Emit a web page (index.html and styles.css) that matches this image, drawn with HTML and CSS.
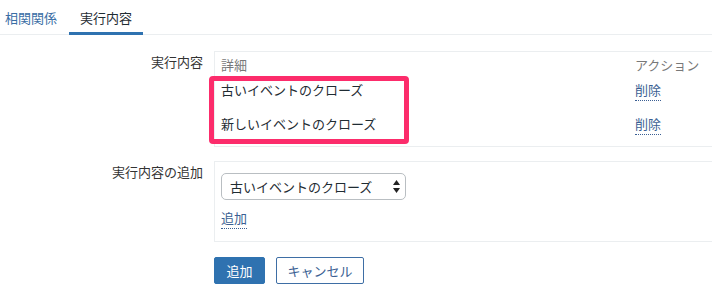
FILE: index.html
```html
<!DOCTYPE html>
<html lang="ja">
<head>
    <meta charset="UTF-8">
    <meta name="viewport" content="width=device-width, initial-scale=1.0">
    <title>アクションの設定</title>
    <link rel="stylesheet" href="styles.css">
</head>
<body>
    <div class="page">
        <!-- Tabs -->
        <ul class="tabs">
            <li class="tab"><a href="#">相関関係</a></li>
            <li class="tab active">実行内容</li>
        </ul>

        <!-- Operations list -->
        <div class="form-row">
            <div class="form-label">実行内容</div>
            <div class="form-field">
                <div class="op-box op-table">
                    <div class="cell head">詳細</div>
                    <div class="cell head">アクション</div>
                    <div class="cell row">古いイベントのクローズ</div>
                    <div class="cell row"><a href="#" class="link">削除</a></div>
                    <div class="cell row">新しいイベントのクローズ</div>
                    <div class="cell row"><a href="#" class="link">削除</a></div>
                    <div class="highlight" aria-hidden="true"></div>
                </div>
            </div>
        </div>

        <!-- Add operation -->
        <div class="form-row">
            <div class="form-label">実行内容の追加</div>
            <div class="form-field">
                <div class="op-box op-new">
                    <span class="select-wrap">
                        <select class="select">
                            <option>古いイベントのクローズ</option>
                            <option>新しいイベントのクローズ</option>
                        </select>
                        <svg class="select-arrows" width="7" height="13" viewBox="0 0 7 13">
                            <path d="M3.5 0 L7 5 L0 5 Z" fill="#222"/>
                            <path d="M0 8 L7 8 L3.5 13 Z" fill="#222"/>
                        </svg>
                    </span>
                    <div><a href="#" class="link">追加</a></div>
                </div>
            </div>
        </div>

        <div class="buttons">
            <button class="btn btn-primary">追加</button>
            <button class="btn btn-alt">キャンセル</button>
        </div>
    </div>
</body>
</html>
```

FILE: styles.css
```css
body {
    margin: 0;
    background: #fff;
    font-family: "Noto Sans CJK JP", "Noto Sans", sans-serif;
    font-size: 13px;
    line-height: 18px;
    color: #1f2c33;
    overflow: hidden;
}
.page {
    width: 712px;
}
a {
    text-decoration: none;
}

/* Tabs */
.tabs {
    list-style: none;
    margin: 0;
    padding: 0;
    display: flex;
    border-bottom: 1px solid #ebeef0;
    height: 34px;
}
.tab {
    padding: 3px 11px 0;
    line-height: 29px;
    height: 29px;
}
.tab:first-child {
    padding-left: 5px;
}
.tab a {
    color: #3a6ea5;
}
.tab.active {
    border-bottom: 3px solid #2f72b0;
    margin-left: 1px;
}

/* Form rows */
.form-row {
    display: flex;
    margin-top: 16px;
}
.form-row + .form-row {
    margin-top: 14px;
}
.form-label {
    width: 203px;
    padding-right: 11px;
    padding-top: 2px;
    text-align: right;
    color: #333;
    flex-shrink: 0;
}
.form-field {
    flex: 1;
    min-width: 0;
}
.op-box {
    border: 1px solid #ebeef0;
    border-right: none;
}

/* Operations table */
.op-table {
    position: relative;
    display: grid;
    grid-template-columns: 414px auto;
}
.cell {
    padding-left: 6px;
    white-space: nowrap;
}
.cell.head {
    color: #787878;
    padding-top: 4px;
    padding-bottom: 4px;
}
.cell.row {
    padding-top: 3px;
    padding-bottom: 13px;
}
.link {
    color: #3b5f93;
    border-bottom: 1px dotted #3b5f93;
    padding-bottom: 1px;
}
.highlight {
    position: absolute;
    left: -6px;
    top: 24px;
    width: 200px;
    height: 68px;
    box-sizing: border-box;
    border: 5px solid #fc2c6b;
    border-radius: 4px;
}

/* New operation */
.op-new {
    padding: 11px 6px 14px;
}
.select-wrap {
    position: relative;
    display: inline-block;
    margin-bottom: 9px;
}
.select {
    -webkit-appearance: none;
    appearance: none;
    width: 185px;
    height: 27px;
    padding: 0 20px 0 8px;
    border: 1px solid #b9bec2;
    border-radius: 5px;
    background: #fff;
    font-family: inherit;
    font-size: 13px;
    color: #1f2c33;
    display: block;
}
.select-arrows {
    position: absolute;
    right: 6px;
    top: 7px;
}

/* Buttons */
.buttons {
    display: flex;
    gap: 11px;
    margin-left: 214px;
    margin-top: 15px;
}
.btn {
    height: 27px;
    font-family: inherit;
    font-size: 13px;
    border-radius: 2px;
    cursor: pointer;
    padding: 0;
}
.btn-primary {
    width: 51px;
    background-color: #2f72b0;
    border: 1px solid #2f72b0;
    color: #fff;
}
.btn-alt {
    width: 88px;
    background-color: #fff;
    border: 1px solid #3e6ea5;
    color: #3b5f93;
}
```
